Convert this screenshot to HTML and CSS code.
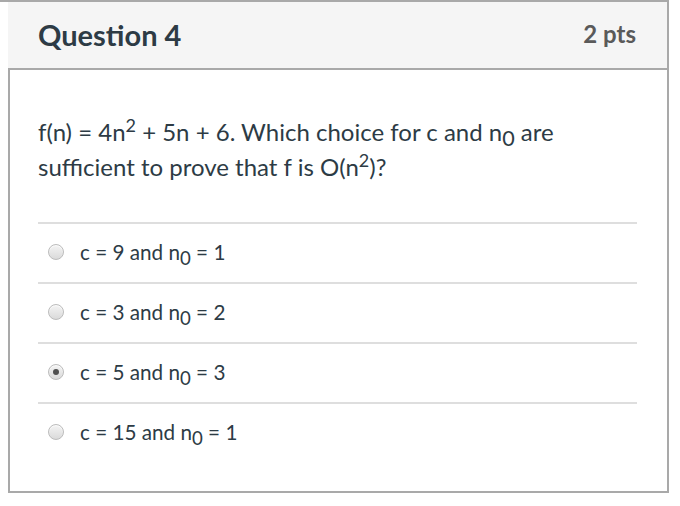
FILE: index.html
```html
<!DOCTYPE html>
<html>
<head>
<meta charset="utf-8">
<link rel="stylesheet" href="styles.css">
</head>
<body>
<div class="page">
  <div class="card">
    <div class="header">
      <div class="title">Question 4</div>
      <div class="pts">2 pts</div>
    </div>
    <div class="body">
      <div class="question">f(n) = 4n<sup>2</sup> + 5n + 6. Which choice for c and n<sub>0</sub> are sufficient to prove that f is O(n<sup>2</sup>)?</div>
      <div class="answers">
        <div class="answer"><span class="radio"></span><span class="label">c = 9 and n<sub>0</sub> = 1</span></div>
        <div class="answer"><span class="radio"></span><span class="label">c = 3 and n<sub>0</sub> = 2</span></div>
        <div class="answer"><span class="radio checked"></span><span class="label">c = 5 and n<sub>0</sub> = 3</span></div>
        <div class="answer"><span class="radio"></span><span class="label">c = 15 and n<sub>0</sub> = 1</span></div>
      </div>
    </div>
  </div>
</div>
</body>
</html>
```

FILE: styles.css
```css
html, body {
  margin: 0;
  padding: 0;
  background: #fff;
}
body {
  font-family: Lato, "Liberation Sans", sans-serif;
  color: #2d3b45;
}
.page {
  width: 669px;
  border-top: 2px solid #a9a9a9;
}
.card {
  margin-left: 8px;
  width: 659px;
  border-right: 2px solid #a9a9a9;
}
.header {
  background: #f5f5f5;
  border-bottom: 2px solid #a9a9a9;
  display: flex;
  align-items: center;
  justify-content: space-between;
  padding: 0 31px 0 30px;
  box-sizing: border-box;
  height: 68px;
}
.title {
  font-size: 29px;
  font-weight: bold;
  color: #2d3b45;
  margin-top: -2px;
}
.pts {
  font-size: 24px;
  font-weight: bold;
  color: #5a5a5a;
  margin-top: -3px;
}
.body {
  border-left: 2px solid #a9a9a9;
  border-bottom: 2px solid #a9a9a9;
  padding: 44px 30px 0 28px;
  box-sizing: border-box;
  height: 423px;
}
.question {
  font-size: 24px;
  line-height: 35px;
  margin-bottom: 38px;
}
sup {
  font-size: 0.75em;
  vertical-align: 0.5em;
  line-height: 0;
}
sub {
  font-size: 0.9em;
  vertical-align: -0.25em;
  line-height: 0;
}
.answers {
  display: flex;
  flex-direction: column;
}
.answer {
  border-top: 2px solid #dedede;
  height: 60px;
  display: flex;
  align-items: center;
  padding-left: 10px;
  box-sizing: border-box;
  padding-bottom: 2px;
}
.radio {
  width: 16px;
  height: 16px;
  border-radius: 50%;
  box-sizing: border-box;
  border: 1px solid #bcbcbc;
  background: linear-gradient(#f4f4f4, #dadada);
  box-shadow: inset 0 1px 1px rgba(255,255,255,0.8);
  position: relative;
  flex: none;
}
.radio.checked::after {
  content: "";
  position: absolute;
  left: 4px;
  top: 4px;
  width: 6px;
  height: 6px;
  border-radius: 50%;
  background: #505050;
}
.label {
  margin-left: 16px;
  font-size: 20.7px;
}
```
